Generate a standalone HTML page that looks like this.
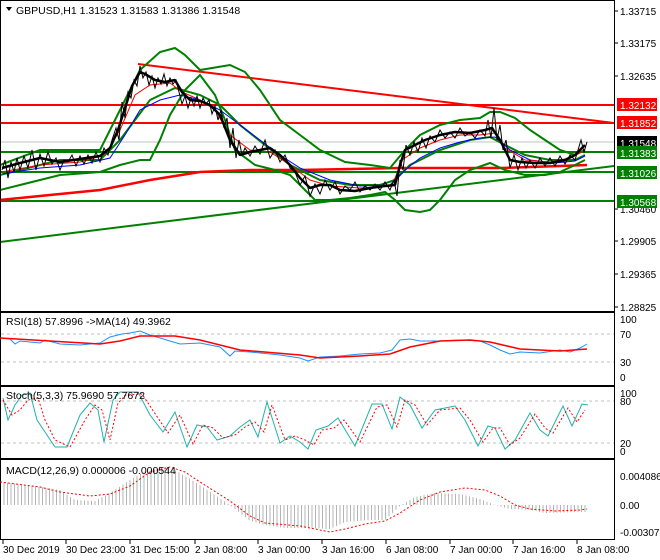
<!DOCTYPE html>
<html><head><meta charset="utf-8"><style>
html,body{margin:0;padding:0;background:#fff;}
svg{display:block;font-family:"Liberation Sans",sans-serif;font-size:10.5px;}
.ax{font-size:10px;}
</style></head><body>
<svg width="660" height="560" viewBox="0 0 660 560" xmlns="http://www.w3.org/2000/svg">
<defs>
<pattern id="hb" width="3.5" height="10" patternUnits="userSpaceOnUse"><rect x="0" y="0" width="1" height="10" fill="#b4b4b4"/></pattern>
<clipPath id="cm"><rect x="1" y="1" width="613" height="310"/></clipPath>
</defs>
<rect width="660" height="560" fill="#fff"/>
<g fill="none" stroke="#000" stroke-width="1">
<rect x="0.5" y="0.5" width="614" height="311"/>
<rect x="0.5" y="312.5" width="614" height="73"/>
<rect x="0.5" y="386.5" width="614" height="72"/>
<rect x="0.5" y="459.5" width="614" height="80"/>
</g>
<g clip-path="url(#cm)">
<line x1="0" y1="142" x2="614" y2="142" stroke="#c0c0c0"/>
<line x1="0" y1="105" x2="614" y2="105" stroke="#f00" stroke-width="2"/>
<line x1="0" y1="123" x2="614" y2="123" stroke="#f00" stroke-width="2"/>
<line x1="138" y1="64" x2="614" y2="123" stroke="#f00" stroke-width="2"/>
<line x1="0" y1="152" x2="614" y2="152" stroke="#008000" stroke-width="2"/>
<line x1="0" y1="172" x2="614" y2="172" stroke="#008000" stroke-width="2"/>
<line x1="0" y1="201" x2="614" y2="201" stroke="#008000" stroke-width="2"/>
<line x1="0" y1="242" x2="614" y2="166" stroke="#008000" stroke-width="2"/>
<polyline fill="none" stroke="#f00" stroke-width="2.5" points="0,200 100,190 150,180 200,172 250,170 300,170 400,168 440,168 500,168 560,166 587,165"/>
<g fill="none" stroke="#008000" stroke-width="2">
<polyline points="0,165 40,150 60,150 100,150 120,110 140,70 160,52 175,48 185,55 200,70 230,65 245,72 260,90 280,120 300,135 320,150 345,162 370,165 390,168 405,150 420,135 440,125 460,120 480,118 490,112 500,112 515,118 530,130 545,140 560,150 575,155 585,150"/>
<polyline points="0,190 20,185 60,175 100,172 120,165 140,160 150,160 160,140 170,115 185,90 200,75 215,95 225,120 235,150 255,165 275,170 290,175 305,190 315,200 330,200 350,198 370,195 385,192 395,200 405,210 420,212 430,210 440,200 455,180 470,170 490,163 505,170 525,175 545,175 560,172 575,165 585,160"/>
<polyline points="0,175 60,160 100,160 120,140 150,100 175,88 200,95 220,105 240,125 265,145 290,165 320,180 350,185 380,185 395,180 410,165 440,150 470,140 490,137 505,145 525,155 550,160 575,160 585,155"/>
</g>
<polyline fill="none" stroke="#00f" stroke-width="1" points="2,174 40,168 80,165 110,158 125,135 140,110 160,100 180,95 200,100 220,110 240,125 260,140 280,155 300,168 330,180 360,186 390,185 405,170 420,158 440,148 460,142 480,138 495,137 510,150 530,160 555,163 575,161 585,156"/>
<polyline fill="none" stroke="#f00" stroke-width="1" points="2,172 40,165 80,162 105,155 120,130 135,95 150,85 170,83 182,92 200,100 215,110 230,135 250,150 270,152 290,165 310,180 330,186 360,188 392,186 402,160 420,148 440,140 460,135 480,135 495,133 505,148 525,160 550,162 570,158 585,150"/>
<polyline fill="none" stroke="#000" stroke-width="1" points="2,170 5,160 8,178 11,162 14,172 17,158 20,170 24,156 28,168 32,150 36,170 40,154 44,166 48,152 52,164 56,158 60,170 64,160 68,162 72,155 76,166 80,156 84,164 88,155 92,163 96,152 100,162 104,148 108,155 112,140 116,128 119,140 122,102 125,118 128,92 131,98 134,80 137,86 140,66 143,78 146,72 149,85 152,76 155,88 158,78 161,84 164,74 167,86 170,78 173,84 176,80 179,92 182,104 185,96 188,108 191,98 194,106 197,96 200,108 203,98 206,104 209,100 212,114 215,106 218,120 221,110 224,128 227,118 230,148 233,128 236,158 239,140 242,155 245,148 250,156 255,146 260,154 265,140 270,158 275,150 280,162 285,155 290,168 295,172 300,185 305,176 310,196 315,184 320,194 325,180 330,190 335,182 340,194 345,186 350,190 355,182 360,192 365,186 370,190 375,184 380,190 385,182 390,190 394,180 397,196 400,160 403,170 406,145 410,155 414,142 418,152 422,138 426,148 430,136 435,142 440,130 445,138 450,132 455,138 460,128 465,136 470,132 475,138 480,130 485,136 488,120 491,138 494,108 497,140 500,125 503,150 506,140 510,168 514,155 518,170 522,158 526,168 530,160 535,168 540,158 545,166 550,158 555,166 560,156 565,164 570,155 575,160 578,150 581,140 584,152 587,142"/>
<polyline fill="none" stroke="#000" stroke-width="2.5" stroke-linejoin="bevel" points="2,168 20,163 40,158 60,162 80,159 100,156 110,148 118,130 125,108 132,86 140,72 145,74 155,80 165,82 175,80 182,92 190,100 200,101 210,105 220,115 230,140 240,155 250,152 260,150 270,148 280,155 290,165 300,178 310,188 320,185 330,185 340,190 355,191 370,188 385,186 395,185 400,165 405,150 415,145 425,140 440,135 455,132 470,133 485,130 492,128 500,140 510,160 520,162 535,163 550,163 565,160 575,155 585,145"/>
</g>
<path d="M6,7 L12,7 L9,11 Z" fill="#000"/>
<text x="16" y="14" fill="#000">GBPUSD,H1  1.31523 1.31583 1.31386 1.31548</text>
<g fill="#000" class="ax">
<text x="620" y="15">1.33715</text>
<text x="620" y="47">1.33175</text>
<text x="620" y="80">1.32635</text>
<text x="620" y="213">1.30460</text>
<text x="620" y="245">1.29905</text>
<text x="620" y="278">1.29365</text>
<text x="620" y="311">1.28825</text>
</g>
<g stroke="#000"><line x1="614" y1="11" x2="618" y2="11"/><line x1="614" y1="43" x2="618" y2="43"/><line x1="614" y1="76" x2="618" y2="76"/><line x1="614" y1="209" x2="618" y2="209"/><line x1="614" y1="241" x2="618" y2="241"/><line x1="614" y1="274" x2="618" y2="274"/><line x1="614" y1="307" x2="618" y2="307"/></g>
<g class="ax">
<rect x="617" y="98" width="40" height="13" fill="#f00"/><text x="620" y="109" fill="#fff">1.32132</text>
<rect x="617" y="116" width="40" height="13" fill="#f00"/><text x="620" y="127" fill="#fff">1.31852</text>
<rect x="617" y="136" width="40" height="13" fill="#000"/><text x="620" y="147" fill="#fff">1.31548</text>
<rect x="617" y="146" width="40" height="13" fill="#008000"/><text x="620" y="157" fill="#fff">1.31383</text>
<rect x="617" y="166" width="40" height="13" fill="#008000"/><text x="620" y="177" fill="#fff">1.31026</text>
<rect x="617" y="195" width="40" height="13" fill="#008000"/><text x="620" y="206" fill="#fff">1.30568</text>
</g>
<g stroke="#c0c0c0" stroke-dasharray="3,3"><line x1="1" y1="334" x2="614" y2="334"/><line x1="1" y1="362" x2="614" y2="362"/></g>
<polyline fill="none" stroke="#1e90ff" stroke-width="1" points="0,338 10,339 15,344 20,341 40,343 45,340 60,344 80,345 100,343 110,337 122,334 130,333 140,331 150,335 180,344 200,343 220,347 230,356 235,351 250,352 280,355 300,358 308,361 320,357 340,356 360,354 380,353 392,350 400,340 410,339 420,341 440,341 460,340 480,341 490,345 500,350 510,354 520,352 540,353 560,350 570,352 580,348 587,344"/>
<polyline fill="none" stroke="#f00" stroke-width="1.5" points="0,338 50,341 100,344 120,341 140,336 175,336 200,340 240,350 300,355 320,358 360,356 390,354 410,347 440,341 470,340 490,342 520,349 560,351 587,349"/>
<text x="6" y="325">RSI(18) 57.8996  -&gt;MA(14) 49.3962</text>
<g class="ax"><text x="620" y="323">100</text><text x="620" y="338">70</text><text x="620" y="366">30</text><text x="620" y="381">0</text></g>
<g stroke="#c0c0c0" stroke-dasharray="3,3"><line x1="1" y1="401" x2="614" y2="401"/><line x1="1" y1="443" x2="614" y2="443"/></g>
<polyline fill="none" stroke="#20b2aa" stroke-width="1" points="3,398 8,420 15,405 22,395 30,393 37,420 45,432 55,447 67,447 80,415 90,403 98,410 104,442 113,400 120,392 138,392 150,415 163,432 175,412 187,447 197,425 207,427 217,440 230,436 240,427 250,420 258,437 267,402 280,443 290,436 300,442 308,449 316,430 328,426 338,418 355,446 372,404 382,404 392,429 400,397 410,405 422,428 435,410 455,406 465,420 478,446 488,426 495,428 505,449 515,440 530,413 540,430 548,436 563,406 572,426 582,404 588,405"/>
<polyline fill="none" stroke="#f00" stroke-width="1" stroke-dasharray="2,2" points="3,400 12,415 20,410 28,400 38,398 45,420 55,440 70,447 85,420 95,405 102,410 110,440 118,403 126,395 142,394 156,415 168,433 180,415 193,444 203,425 213,428 223,438 235,435 245,427 255,422 264,432 272,405 285,440 295,436 305,440 314,445 322,430 334,428 344,420 360,442 377,407 387,405 397,427 405,400 415,405 427,425 440,410 460,408 470,420 483,442 493,428 500,428 510,445 520,438 535,414 545,428 553,433 568,408 577,422 585,410"/>
<text x="6" y="399">Stoch(5,3,3) 75.9690 57.7672</text>
<g class="ax"><text x="620" y="397">100</text><text x="620" y="405">80</text><text x="620" y="447">20</text><text x="620" y="455">0</text></g>
<polygon fill="url(#hb)" points="2,505 2,482 40,487 60,490 75,500 95,501 110,493 130,480 145,471 165,467 175,470 195,482 215,495 230,505 230,505 250,521 265,525 285,528 310,528 330,529 345,522 370,520 385,520 400,506 415,497 435,493 460,494 480,499 495,505 510,509 530,510 545,513 575,512 587,512 587,505"/>
<polyline fill="none" stroke="#f00" stroke-width="1" stroke-dasharray="2,2" points="0,482 40,487 60,492 90,496 110,494 130,486 150,472 170,467 185,472 200,482 230,501 250,516 265,523 300,526 330,532 345,529 365,524 385,521 400,513 420,500 440,492 465,488 485,490 500,496 515,505 530,509 555,511 580,510 587,509"/>
<text x="6" y="474">MACD(12,26,9) 0.000006 -0.000544</text>
<g class="ax"><text x="620" y="480">0.004086</text><text x="620" y="509">0.00</text><text x="620" y="536">-0.003079</text></g>
<g stroke="#000">
<line x1="3" y1="540" x2="3" y2="544"/><line x1="66" y1="540" x2="66" y2="544"/><line x1="130" y1="540" x2="130" y2="544"/><line x1="195" y1="540" x2="195" y2="544"/><line x1="258" y1="540" x2="258" y2="544"/><line x1="322" y1="540" x2="322" y2="544"/><line x1="386" y1="540" x2="386" y2="544"/><line x1="450" y1="540" x2="450" y2="544"/><line x1="513" y1="540" x2="513" y2="544"/><line x1="577" y1="540" x2="577" y2="544"/>
</g>
<g fill="#000" class="ax">
<text x="3" y="553">30 Dec 2019</text><text x="66" y="553">30 Dec 23:00</text><text x="130" y="553">31 Dec 15:00</text><text x="195" y="553">2 Jan 08:00</text><text x="258" y="553">3 Jan 00:00</text><text x="322" y="553">3 Jan 16:00</text><text x="386" y="553">6 Jan 08:00</text><text x="450" y="553">7 Jan 00:00</text><text x="513" y="553">7 Jan 16:00</text><text x="577" y="553">8 Jan 08:00</text>
</g>
</svg>
</body></html>
